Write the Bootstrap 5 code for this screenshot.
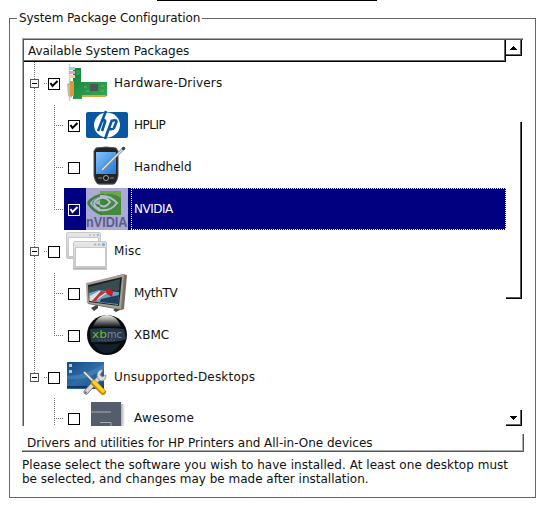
<!DOCTYPE html>
<html lang="en">
<head>
<meta charset="utf-8">
<title>System Package Configuration</title>
<link rel="stylesheet" href="https://cdn.jsdelivr.net/npm/bootstrap@5.3.0/dist/css/bootstrap.min.css">
<style>
body{font:12px/14px "DejaVu Sans",sans-serif;color:#111;background:#fff;width:550px;height:508px;overflow:hidden}
.topline{width:220px;height:1px;margin-left:157px;background:#000}
.group{margin:10px 14px 0 9px;height:487px;padding:0 11px 0 13px;background:linear-gradient(#666,#666) 0 7px/100% 1px no-repeat,linear-gradient(#666,#666) 0 7px/1px 480px no-repeat,linear-gradient(#666,#666) 100% 7px/1px 480px no-repeat,linear-gradient(#666,#666) 0 486px/100% 1px no-repeat}
.caption{margin-left:-5px;padding:0 0 0 2px;width:185px;height:14px;background:#fff;white-space:nowrap;letter-spacing:-.08px}
.tree{width:501px;height:388px;margin-top:13px;border-left:1px solid #aaa;border-top:1px solid #aaa}
.inner{border-left:1px solid #555;border-top:1px solid #555}
.head{width:482px;height:22px;padding:4px 0 0 4px;border-right:1px solid #000;border-bottom:1px solid #000;box-shadow:inset -1px -1px #666;letter-spacing:-.06px}
.rows{width:482px;height:364px}
.item{height:42px;flex:none}
.item.short{height:41px}
.ind{width:20px;flex:none;background:repeating-linear-gradient(#777 0 1px,transparent 1px 2px) 10px 0/1px 100% no-repeat}
.ind.off{background:none}
.ind.end{background-size:1px 17px}
.branch{background:repeating-linear-gradient(#777 0 1px,transparent 1px 2px) 10px 1px/1px 100% no-repeat,repeating-linear-gradient(90deg,#777 0 1px,transparent 1px 2px) 10px 21px/9px 1px no-repeat}
.branch.last{background-size:1px 21px,9px 1px}
.ind.stub{background:repeating-linear-gradient(90deg,#777 0 1px,transparent 1px 2px) 0 21px/3px 1px no-repeat}
.exp{width:9px;height:9px;margin:17px 0 0 6px;border:1px solid #555;background:linear-gradient(#000,#000) 1px 3px/5px 1px no-repeat #fff}
.box{width:12px;height:12px;margin:16px 0 0 4px;border:1px solid #000;background:#fff;display:block}
.box path{fill:none;stroke:#000;stroke-width:2}
.sel .box{border-color:#fff;background:#000080}
.sel .box path{stroke:#fff}
.pic{width:42px;height:42px;flex:none;margin-left:2px;display:block}
.lbl{padding:14px 0 0 6px;white-space:nowrap}
.tight{letter-spacing:-.5px}
.snug{letter-spacing:-.3px}
.loose{letter-spacing:.18px}
.wide{letter-spacing:.4px}
.sel .hl{background:#000080}
.sel .lbl{color:#fff;margin-left:3px;padding-left:3px;background:repeating-linear-gradient(90deg,#ffffb0 0 1px,#000080 1px 2px) 0 0/100% 1px no-repeat,repeating-linear-gradient(90deg,#ffffb0 0 1px,#000080 1px 2px) 0 100%/100% 1px no-repeat,repeating-linear-gradient(#ffffb0 0 1px,#000080 1px 2px) 0 0/1px 100% no-repeat,repeating-linear-gradient(#ffffb0 0 1px,#000080 1px 2px) 100% 0/1px 100% no-repeat}
.bar{width:16px;height:386px}
.bar>div{border-right:1px solid #000;box-shadow:inset -1px 0 #555}
.bar .arrow{width:16px;height:16px;border-bottom:1px solid #000;box-shadow:inset -1px -1px #666}
.arrow svg{display:block}
.bar .thumb{height:177px;margin-top:66px;border-bottom:1px solid #000;box-shadow:inset -1px -1px #555}
.status{width:502px;height:18px;margin-top:8px;padding:2px 0 0 5px;border-right:1px solid #555;border-bottom:1px solid #555;box-shadow:inset -1px -1px #aaa;white-space:nowrap;letter-spacing:-.02px}
.note{margin:6px -10px 0 0}
.note span{letter-spacing:.04px}
</style>
</head>
<body>
<div class="topline"></div>
<main class="group">
 <div class="caption">System Package Configuration</div>
 <section class="tree">
  <div class="inner d-flex">
   <div>
    <div class="head">Available System Packages</div>
    <div class="rows d-flex flex-column overflow-hidden">
     <div class="item d-flex"><div class="ind"><div class="exp"></div></div><div class="ind off stub"><svg class="box"><path d="M1.500 4L3.500 7 8.500 2"/></svg></div>
      <svg class="pic" viewBox="0 0 42 42"><defs><linearGradient id="g1" x2="1" y2="1"><stop stop-color="#18813d"/><stop offset="1" stop-color="#36a852"/></linearGradient></defs><path d="M3.500 2v37" stroke="#ccc" stroke-width="1.500"/><path d="M7 6h8v14h26v14H16v3H7Z" fill="url(#g1)"/><path d="M16 33h24v2H16z" fill="#d8a63a"/><path d="M1 22l5-3v17l-4-2Z" fill="#bbb"/><path d="M4 19h4v15H4z" fill="#dc9a31"/><path d="M3 5h6v3H3z" fill="#88ded9"/><path d="M3 9h6v3H3z" fill="#eaa0bd"/><path d="M3 13h6v3H3z" fill="#f0da8a"/><path d="M24 22h8v7h-8z" fill="#4d5556"/><path d="M11 9h2v3h-2zM18 25h3m-1 4h3m12-5h3m-3 5h3" stroke="#5fb274" fill="#0b552b"/></svg>
      <div class="lbl loose">Hardware-Drivers</div></div>
     <div class="item d-flex"><div class="ind"></div><div class="ind branch"></div><div class="ind off"><svg class="box"><path d="M1.500 4L3.500 7 8.500 2"/></svg></div>
      <svg class="pic" viewBox="0 0 42 42"><rect y="8" width="42" height="26" rx="2" fill="#0758a0"/><ellipse cx="21" cy="21" rx="13" ry="12.500" fill="#fff"/><g fill="none" stroke="#0758a0" stroke-width="2.600"><path d="M20 7l-8 20M15 17q5-2 4 1l-3 9M26 16l-7 19M25 17q7-2 5 2l-2 5q-1 2-6 1"/></g></svg>
      <div class="lbl tight">HPLIP</div></div>
     <div class="item d-flex"><div class="ind"></div><div class="ind branch"></div><div class="ind off"><svg class="box"></svg></div>
      <svg class="pic" viewBox="0 0 42 42"><defs><linearGradient id="g2" x2="1" y2="1"><stop stop-color="#84c3ff"/><stop offset="1" stop-color="#2377d2"/></linearGradient></defs><ellipse cx="20" cy="37" rx="10" ry="2" fill="#aaa"/><path d="M10 2q10-2 20 0l2 3v25q-1 6-4 8H12q-3-2-4-8V5Z" fill="#202427" stroke="#555"/><path d="M10 6h20v22H10z" fill="url(#g2)"/><circle cx="20" cy="32" r="2.500" fill="#111" stroke="#aaa"/><path d="M12 32h4m8 0h4" stroke="#888"/><path d="M16 24L37 3" stroke="#747b83" stroke-width="2.600"/><path d="M16 24L37 3" stroke="#e2e7eb" stroke-width="1.500"/><circle cx="37.500" cy="2.500" r="1.800" fill="#444"/></svg>
      <div class="lbl">Handheld</div></div>
     <div class="item d-flex sel"><div class="ind"></div><div class="ind branch last"></div><div class="d-flex flex-fill hl"><div class="ind off"><svg class="box"><path d="M1.500 4L3.500 7 8.500 2"/></svg></div>
      <svg class="pic" viewBox="0 0 42 42"><path d="M0 0h42v42H0z" fill="#aaaad5"/><path d="M14 3h21v24H14z" fill="#47893a"/><path d="M14 3h21v7Q26 3 14 8Z" fill="#69a650"/><g fill="none" stroke="#3f8038" stroke-width="2.500"><path d="M2 15Q8 7 18 7"/><path d="M2 15q6 9 14 11"/><path d="M7 15q7-8 14-1-6 8-14 1"/></g><g fill="none" stroke="#b6bdd2" stroke-width="2"><path d="M14 8q10-1 17 7-7 9-17 7Q6 17 9 13q9-7 15 1-5 7-10 3"/></g><text x="0" y="39" textLength="41.500" lengthAdjust="spacingAndGlyphs" font-family="Liberation Sans" font-size="14" font-weight="bold" fill="#5c5c88">nVIDIA</text></svg>
      <div class="lbl tight flex-fill">NVIDIA</div></div></div>
     <div class="item d-flex"><div class="ind"><div class="exp"></div></div><div class="ind off stub"><svg class="box"></svg></div>
      <svg class="pic" viewBox="0 0 42 42"><defs><linearGradient id="g3" x2="0" y2="1"><stop stop-color="#e8e8e8"/><stop offset="1" stop-color="#c9c9c9"/></linearGradient></defs><g stroke="#c8c8c8"><rect x=".5" y="2.500" width="34" height="26" rx="1.500" fill="url(#g3)"/><path d="M2.500 7.500h30v19h-30z" fill="#fff"/><rect x="7.500" y="11.500" width="33" height="27" rx="1.500" fill="url(#g3)"/><path d="M9.500 17.500h30v19h-30z" fill="#fff"/></g><path d="M7 39h34" stroke="#999"/><g fill="#bbb"><circle cx="24" cy="5" r="1"/><circle cx="28" cy="5" r="1"/><circle cx="29" cy="14.500" r="1.300"/><circle cx="33" cy="14.500" r="1.300"/></g><circle cx="32" cy="5" r="1.300" fill="#8ebce8"/><circle cx="37.500" cy="14.500" r="1.700" fill="#76b5f2"/></svg>
      <div class="lbl loose">Misc</div></div>
     <div class="item d-flex"><div class="ind"></div><div class="ind branch"></div><div class="ind off"><svg class="box"></svg></div>
      <svg class="pic" viewBox="0 0 42 42"><path d="M5 36l7-4v4l-4 3Zm22 2l7-4 2 3-6 3Z" fill="#444"/><path d="M1 12L37 2l4 1-3 34-3 1L2 32Z" fill="#777064"/><path d="M0 11L38 2l-3 35L1 31Z" fill="#aaa095"/><path d="M2 13L36 5l-3 29L3 30Z" fill="#16242a"/><path d="M3 15l31-8-1 12-18-1-12 4Z" fill="#3a4c50"/><path d="M3 21l10-3 20 2-1 13L3 29Z" fill="#6f9fbd"/><path d="M4 24l9-5 8 2-10 7-7 1Z" fill="#d9e4e7"/><path d="M15 19l5 1-7 5-3 4H6Z" fill="#c4303a"/><path d="M19 18l4-2 4 4-1 5-5-3Z" fill="#c51f26"/><path d="M15 27l18-4-1 9-18-2Z" fill="#1f4058"/></svg>
      <div class="lbl snug">MythTV</div></div>
     <div class="item d-flex"><div class="ind"></div><div class="ind branch last"></div><div class="ind off"><svg class="box"></svg></div>
      <svg class="pic" viewBox="0 0 42 42"><defs><linearGradient id="g4" x2="0" y2="1"><stop stop-color="#f6f6f6"/><stop offset=".42" stop-color="#777"/><stop offset=".8" stop-color="#080a0c"/></linearGradient></defs><circle cx="21" cy="21" r="20" fill="#080a0c"/><path d="M7 12Q12 1 21 1t14 11Q39 18 21 16 3 18 7 12" fill="url(#g4)"/><path d="M4 15q17-2 34 0l2 10q-9 4-35 3Z" fill="#26384c"/><path d="M7 29q14 3 28 0-6 10-14 10T7 29" fill="#12202c"/><text x="6" y="24" textLength="15" lengthAdjust="spacingAndGlyphs" font-family="DejaVu Sans" font-size="10" fill="#75b82b">xb</text><text x="21" y="24" textLength="15" lengthAdjust="spacingAndGlyphs" font-family="DejaVu Sans" font-size="10" fill="#7d8997">mc</text><path d="M12 26h18" stroke="#53616f" stroke-dasharray="2 1"/></svg>
      <div class="lbl">XBMC</div></div>
     <div class="item short d-flex"><div class="ind end"><div class="exp"></div></div><div class="ind off stub"><svg class="box"></svg></div>
      <svg class="pic" viewBox="0 0 42 42"><defs><linearGradient id="g5" x2="1" y2="1"><stop stop-color="#174a82"/><stop offset=".5" stop-color="#2d6ca8"/><stop offset="1" stop-color="#164879"/></linearGradient></defs><path d="M1 6h37v27H1z" fill="url(#g5)"/><path d="M1 20Q20 20 38 8v5Q22 25 1 23Z" fill="#5290c3" opacity=".5"/><path d="M1 30h37v2H1z" fill="#16345f"/><path d="M3 8h3v3H3zm0 6h3v3H3z" fill="#a9d1bd"/><path d="M18 16l9 9" stroke="#777" stroke-width="3"/><path d="M18 16l9 9" stroke="#eee" stroke-width="1.500"/><path d="M20 36L34 21" stroke="#777" stroke-width="5" stroke-linecap="round"/><path d="M20 36L34 21" stroke="#d9d9d9" stroke-width="3.400" stroke-linecap="round"/><path d="M37 14q-5-1-6 5 0 5 4 6 5 0 5-6l-4 2-2-2Z" fill="#ddd" stroke="#888" stroke-width=".8"/><path d="M28 27l9 9" stroke="#c88705" stroke-width="6" stroke-linecap="round"/><path d="M28 26l9 9" stroke="#ffd22b" stroke-width="3.500" stroke-linecap="round"/><circle cx="19.500" cy="36.500" r="1.300" fill="#777"/></svg>
      <div class="lbl loose">Unsupported-Desktops</div></div>
     <div class="item d-flex"><div class="ind off"></div><div class="ind branch"></div><div class="ind off"><svg class="box"></svg></div>
      <svg class="pic" viewBox="0 0 42 42"><defs><linearGradient id="g6"><stop stop-color="#999"/><stop offset="1" stop-color="#fff"/></linearGradient></defs><path d="M34 7h5v35h-5z" fill="url(#g6)"/><path d="M5 5h30v37H5z" fill="#535d6c"/><path d="M5 15h20M14 25.500h11V42" fill="none" stroke="#a7acb3"/></svg>
      <div class="lbl wide">Awesome</div></div>
    </div>
   </div>
   <div class="bar d-flex flex-column">
    <div class="arrow"><svg width="15" height="15"><path d="M7 6h1v1h1v1h1v1h1v1H4V9h1V8h1V7h1z"/></svg></div>
    <div class="thumb"></div>
    <div class="arrow mt-auto"><svg width="15" height="15"><path d="M4 6h7v1h-1v1H9v1H8v1H7V9H6V8H5V7H4z"/></svg></div>
   </div>
  </div>
 </section>
 <div class="status">Drivers and utilities for HP Printers and All-in-One devices</div>
 <div class="note"><span>Please select the software you wish to have installed. At least one desktop must</span><br>be selected, and changes may be made after installation.</div>
</main>
<script src="https://cdn.jsdelivr.net/npm/bootstrap@5.3.0/dist/js/bootstrap.bundle.min.js"></script>
</body>
</html>
